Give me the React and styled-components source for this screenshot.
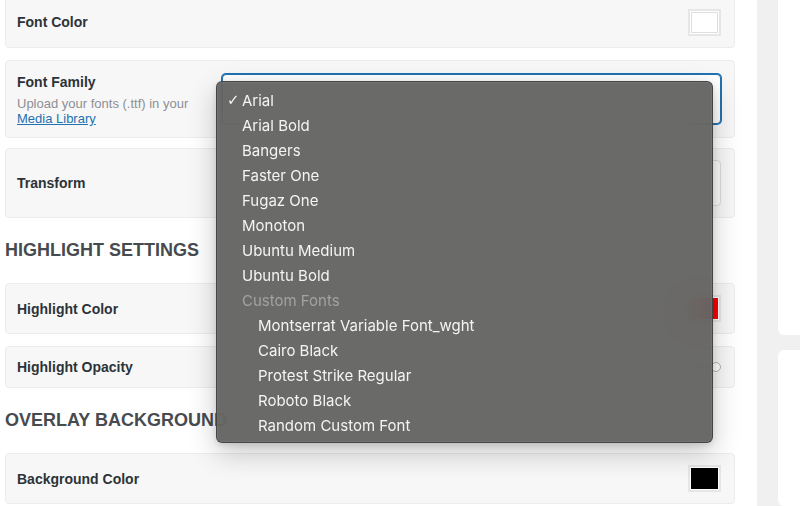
import React from "react";
import styled, { createGlobalStyle } from "styled-components";

const Global = createGlobalStyle`
  html, body { margin: 0; padding: 0; background: #ffffff; overflow: hidden; }
  body { font-family: "Liberation Sans", Arial, sans-serif; }
  * { box-sizing: border-box; }
`;

const Page = styled.div`
  display: flex;
  width: 800px;
  height: 506px;
  overflow: hidden;
`;

const Main = styled.div`
  width: 757px;
  flex-shrink: 0;
  padding: 0 22px 0 5px;
  margin-top: -4px;
  display: flex;
  flex-direction: column;
`;

const Card = styled.div`
  height: ${(p) => p.$h}px;
  flex-shrink: 0;
  margin-bottom: ${(p) => (p.$mb != null ? p.$mb : 12)}px;
  background: #f7f7f7;
  border: 1px solid #ececec;
  border-radius: 4px;
  padding: 0 13px 0 11px;
  display: flex;
  align-items: center;
  justify-content: space-between;
`;

const LabelBlock = styled.div`
  display: flex;
  flex-direction: column;
`;

const Label = styled.div`
  font-size: 14px;
  line-height: 20px;
  font-weight: 700;
  color: #2c3338;
`;

const Desc = styled.div`
  margin-top: 4px;
  font-size: 13px;
  line-height: 15px;
  color: #8c8f94;
`;

const Link = styled.a`
  color: #2271b1;
  text-decoration: underline;
  cursor: pointer;
`;

const Heading = styled.h2`
  margin: 9px 0 22px;
  font-size: 18px;
  line-height: 22px;
  font-weight: 700;
  color: #474b50;
  text-transform: uppercase;
  white-space: nowrap;
`;

const Swatch = styled.div`
  width: 33px;
  height: 27px;
  border: 2px solid #e6e6e6;
  background: #ffffff;
  padding: 1px;
  display: flex;
`;

const SwatchFill = styled.div`
  flex: 1;
  background: ${(p) => p.$color};
  border: 1px solid ${(p) => (p.$color === "#ffffff" ? "#dedede" : p.$color)};
`;

const SelectWrap = styled.div`
  position: relative;
  z-index: ${(p) => (p.$open ? 5 : "auto")};
  width: 499px;
  height: ${(p) => p.$h}px;
`;

const SelectBox = styled.div`
  width: 100%;
  height: 100%;
  border-radius: 4px;
  background: ${(p) => (p.$focus ? "#ffffff" : "#fbfbfb")};
  border: 1px solid ${(p) => (p.$focus ? "#2271b1" : "#dcdcde")};
  box-shadow: ${(p) => (p.$focus ? "0 0 0 1px #2271b1" : "none")};
`;

const Slider = styled.div`
  position: relative;
  width: 200px;
  height: 12px;
  display: flex;
  align-items: center;
`;

const Track = styled.div`
  width: 100%;
  height: 4px;
  border-radius: 2px;
  background: #dcdcde;
`;

const Thumb = styled.div`
  position: absolute;
  right: 0;
  top: 1px;
  width: 10px;
  height: 10px;
  border-radius: 50%;
  background: #ffffff;
  border: 1px solid #b4b4b4;
`;

const Menu = styled.ul`
  position: absolute;
  z-index: 10;
  left: -6px;
  top: 7px;
  width: 497px;
  margin: 0;
  padding: 6px 0 4px;
  list-style: none;
  background: rgba(97, 97, 96, 0.94);
  backdrop-filter: blur(24px);
  -webkit-backdrop-filter: blur(24px);
  border: 1px solid rgba(45, 45, 45, 0.6);
  border-radius: 6px;
  box-shadow: inset 0 0 0 0.5px rgba(255, 255, 255, 0.12), 0 10px 28px rgba(0, 0, 0, 0.22), 0 2px 6px rgba(0, 0, 0, 0.12);
`;

const Item = styled.li`
  position: relative;
  height: 25px;
  line-height: 25px;
  padding-left: ${(p) => (p.$indent ? 41 : 25)}px;
  font-family: Inter, "Noto Sans", sans-serif;
  font-size: 15px;
  color: ${(p) => (p.$group ? "#a3a3a3" : "#f4f4f4")};
  white-space: nowrap;
`;

const Check = styled.span`
  position: absolute;
  left: 10px;
  top: 0;
  font-family: "DejaVu Sans", sans-serif;
  font-size: 15px;
  color: #f4f4f4;
`;

const Sidebar = styled.div`
  flex: 1;
  background: #f0f0f0;
  padding-left: 21px;
  display: flex;
  flex-direction: column;
  gap: 15px;
`;

const SideCard = styled.div`
  background: #ffffff;
  border-radius: 6px 0 0 6px;
  height: ${(p) => (p.$h ? `${p.$h}px` : "auto")};
  flex: ${(p) => (p.$h ? "none" : "1")};
  margin-top: ${(p) => p.$mt || 0}px;
`;

const fonts = [
  { name: "Arial", checked: true },
  { name: "Arial Bold" },
  { name: "Bangers" },
  { name: "Faster One" },
  { name: "Fugaz One" },
  { name: "Monoton" },
  { name: "Ubuntu Medium" },
  { name: "Ubuntu Bold" },
  { name: "Custom Fonts", group: true },
  { name: "Montserrat Variable Font_wght", indent: true },
  { name: "Cairo Black", indent: true },
  { name: "Protest Strike Regular", indent: true },
  { name: "Roboto Black", indent: true },
  { name: "Random Custom Font", indent: true },
];

export default function App() {
  return (
    <>
      <Global />
      <Page>
        <Main>
          <Card $h={52}>
            <Label>Font Color</Label>
            <Swatch>
              <SwatchFill $color="#ffffff" />
            </Swatch>
          </Card>
          <Card $h={78} $mb={10}>
            <LabelBlock>
              <Label>Font Family</Label>
              <Desc>
                Upload your fonts (.ttf) in your
                <br />
                <Link>Media Library</Link>
              </Desc>
            </LabelBlock>
            <SelectWrap $h={50} $open>
              <SelectBox $focus />
              <Menu>
                {fonts.map((f) => (
                  <Item key={f.name} $indent={f.indent} $group={f.group}>
                    {f.checked && <Check>✓</Check>}
                    {f.name}
                  </Item>
                ))}
              </Menu>
            </SelectWrap>
          </Card>
          <Card $h={70} $mb={12}>
            <Label>Transform</Label>
            <SelectWrap $h={46}>
              <SelectBox />
            </SelectWrap>
          </Card>
          <Heading>Highlight Settings</Heading>
          <Card $h={51}>
            <Label>Highlight Color</Label>
            <Swatch>
              <SwatchFill $color="#ff0000" />
            </Swatch>
          </Card>
          <Card $h={42}>
            <Label>Highlight Opacity</Label>
            <Slider>
              <Track />
              <Thumb />
            </Slider>
          </Card>
          <Heading>Overlay Background</Heading>
          <Card $h={51}>
            <Label>Background Color</Label>
            <Swatch>
              <SwatchFill $color="#000000" />
            </Swatch>
          </Card>
        </Main>
        <Sidebar>
          <SideCard $h={345} $mt={-10} />
          <SideCard />
        </Sidebar>
      </Page>
    </>
  );
}
